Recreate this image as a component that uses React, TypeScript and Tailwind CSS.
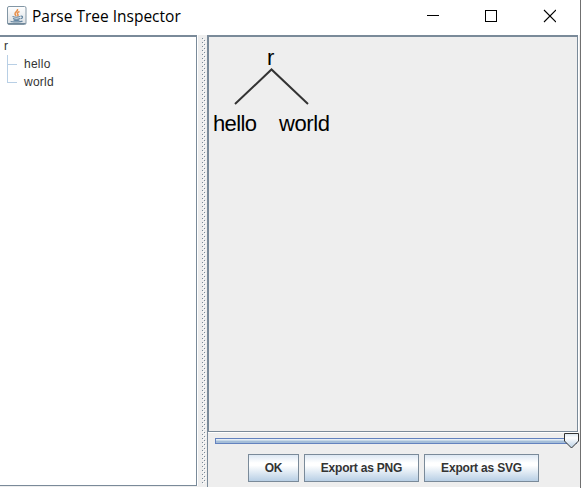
import React from "react";

function JavaIcon() {
  return (
    <svg width="20" height="20" viewBox="0 0 20 20">
      <defs>
        <linearGradient id="tile" x1="0" y1="0" x2="0" y2="1">
          <stop offset="0" stopColor="#ffffff" />
          <stop offset="1" stopColor="#dbe0e4" />
        </linearGradient>
      </defs>
      <rect x=".5" y=".5" width="18.5" height="18" rx="1.5" fill="url(#tile)" stroke="#8296a5" />
      <path d="M1 17.5h17.5" stroke="#70889a" />
      <path d="M10.5 3c1 2-3 3-2.5 5 .2 1 1 1.300 1 2.200M12.500 5.500c-2.500 1-2.500 2-1.500 3.200.4.6-.2 1.200-.8 1.500" fill="none" stroke="#e8904c" strokeWidth="1.500" />
      <path d="M5.500 10.500c2 .8 5.500.8 7.500 0M6 12.500c2 .8 5 .8 7 0M6.500 14c2 .7 4 .7 6 0M4 15c-.5 1.200 10 1.200 11.500 0M13.500 10.300c3-.8 2.500 2.200 0 2.500" fill="none" stroke="#6485a0" strokeWidth="1.100" />
    </svg>
  );
}

function TitleBar() {
  return (
    <header className="flex h-[35px] shrink-0 bg-white">
      <div className="ml-[7px] mt-[6px] w-[25px]"><JavaIcon /></div>
      <h1 className="mt-[5px] whitespace-nowrap font-['Open_Sans','Noto_Sans',sans-serif] text-[15.5px] leading-[23px] text-black">Parse Tree Inspector</h1>
      <svg className="ml-auto mr-[24px] mt-[9px]" width="130" height="14" viewBox="0 0 130 14" fill="none" stroke="#000">
        <path d="M1 6.500h12" />
        <rect x="59.500" y="1.500" width="11" height="11" />
        <path d="M118 1l12 12M130 1l-12 12" strokeWidth="1.100" />
      </svg>
    </header>
  );
}

function TreeList() {
  return (
    <aside className="flex h-[451px] w-[198px] shrink-0 flex-col border-r border-white">
      <div className="flex-1 border-b border-r border-t-2 border-[#7a8a99] bg-white font-['Liberation_Sans',Arial,sans-serif] text-[12px] leading-[18px] tracking-[0.25px] text-[#333]">
        <div className="pl-1">r</div>
        <div className="flex">
          <svg className="ml-[7px] w-[17px]" width="17" height="36" fill="none" stroke="#b8cfe5">
            <path d="M.5 0v27.500M0 9.500h10M0 27.500h10" />
          </svg>
          <div><div>hello</div><div>world</div></div>
        </div>
      </div>
    </aside>
  );
}

function Splitter() {
  return (
    <svg className="w-[9px] shrink-0" width="9" height="452">
      <defs>
        <pattern id="grip" width="4" height="4" patternUnits="userSpaceOnUse">
          <path d="M0 0h1v1H0zM2 2h1v1H2z" fill="#7a8a99" />
          <path d="M1 1h1v1H1zM3 3h1v1H3z" fill="#fff" />
        </pattern>
      </defs>
      <rect width="9" height="452" fill="#eee" />
      <rect width="4" height="446" transform="translate(4 3)" fill="url(#grip)" />
    </svg>
  );
}

function Slider() {
  return (
    <svg className="block" width="371" height="18" viewBox="0 0 371 18">
      <defs>
        <linearGradient id="thumb" x1="0" y1="0" x2="0" y2="1">
          <stop offset="0" stopColor="#d8e5ef" />
          <stop offset=".3" stopColor="#fff" />
          <stop offset="1" stopColor="#b8cfe5" />
        </linearGradient>
      </defs>
      <rect x="7.500" y="5.500" width="361" height="5" fill="#a4bdd8" stroke="#6382bf" />
      <path d="M8 6.500h360" stroke="#e6eff7" />
      <path d="M8 7.500h360" stroke="#c6d8e8" />
      <path d="M356.500 .5h14v7.500l-7 7-7-7z" fill="url(#thumb)" stroke="#333" />
    </svg>
  );
}

function Button({ children, width }: { children: React.ReactNode; width: string }) {
  return (
    <button className={`${width} h-[28px] border border-[#7a8a99] bg-[linear-gradient(180deg,#dde8f3_0%,#ffffff_30%,#ffffff_40%,#b8cfe5_100%)] text-center font-['Liberation_Sans',Arial,sans-serif] text-[12px] font-bold leading-[26px] tracking-[-0.2px] text-[#333] whitespace-nowrap`}>
      {children}
    </button>
  );
}

function TreeViewer() {
  return (
    <div className="h-[397px] w-[371px] border-b border-l-2 border-r border-t-2 border-[#7a8a99] shadow-[0_1px_0_#fff,1px_0_0_#fff]">
      <svg width="368" height="394" viewBox="209 37 368 394" fontFamily="'Liberation Sans', Arial, sans-serif" fontSize="22" fill="#000">
        <path d="M235 104L271.500 69.500L308 104" fill="none" stroke="#333" strokeWidth="2" />
        <text x="267" y="65">r</text>
        <text x="213" y="131" textLength="44">hello</text>
        <text x="279" y="131" textLength="51">world</text>
      </svg>
    </div>
  );
}

export default function App() {
  return (
    <main className="flex h-[488px] w-[581px] flex-col overflow-hidden border-r border-[#707070] bg-white">
      <TitleBar />
      <div className="flex h-[452px] bg-[#eee]">
        <TreeList />
        <Splitter />
        <section className="w-[373px] shrink-0">
          <TreeViewer />
          <div className="h-[55px] border-l border-[#7a8a99]">
            <div className="pt-px"><Slider /></div>
            <div className="ml-[40px] mt-[3px] flex gap-[5px]">
              <Button width="w-[51px]">OK</Button>
              <Button width="w-[115px]">Export as PNG</Button>
              <Button width="w-[115px]">Export as SVG</Button>
            </div>
          </div>
        </section>
      </div>
    </main>
  );
}
